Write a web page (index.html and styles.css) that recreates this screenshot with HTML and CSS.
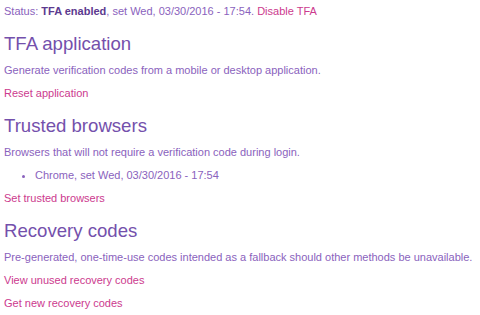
FILE: index.html
```html
<!DOCTYPE html>
<html lang="en">
<head>
    <meta charset="UTF-8">
    <meta name="viewport" content="width=device-width, initial-scale=1.0">
    <title>Two-factor authentication</title>
    <link rel="stylesheet" href="styles.css">
</head>
<body>
    <div class="tfa">
        <p class="status">Status: <strong>TFA enabled</strong>, set Wed, 03/30/2016 - 17:54. <a href="#">Disable TFA</a></p>

        <section class="tfa-section">
            <h2>TFA application</h2>
            <p>Generate verification codes from a mobile or desktop application.</p>
            <p><a href="#">Reset application</a></p>
        </section>

        <section class="tfa-section">
            <h2>Trusted browsers</h2>
            <p>Browsers that will not require a verification code during login.</p>
            <ul class="browsers">
                <li>Chrome, set Wed, 03/30/2016 - 17:54</li>
            </ul>
            <p><a href="#">Set trusted browsers</a></p>
        </section>

        <section class="tfa-section">
            <h2>Recovery codes</h2>
            <p>Pre-generated, one-time-use codes intended as a fallback should other methods be unavailable.</p>
            <p><a href="#">View unused recovery codes</a></p>
            <p><a href="#">Get new recovery codes</a></p>
        </section>
    </div>
</body>
</html>
```

FILE: styles.css
```css
body {
    font-family: 'Liberation Sans', Arial, sans-serif;
    font-size: 11px;
    line-height: 17px;
    margin: 0;
    padding: 0;
    background-color: #fff;
    color: #8a62bd;
}

.tfa {
    padding: 3px 0 0 4px;
}

p {
    margin: 0 0 6px;
}

a {
    color: #cc3a8e;
    text-decoration: none;
}

strong {
    color: #5c3a8f;
}

.status {
    margin-bottom: 13px;
}

h2 {
    font-size: 18.6px;
    font-weight: normal;
    line-height: 22px;
    color: #7450ac;
    margin: 0 0 7px;
}

.tfa-section {
    margin-bottom: 13px;
}

.browsers {
    margin: 0 0 6px;
    padding-left: 31px;
}
```
